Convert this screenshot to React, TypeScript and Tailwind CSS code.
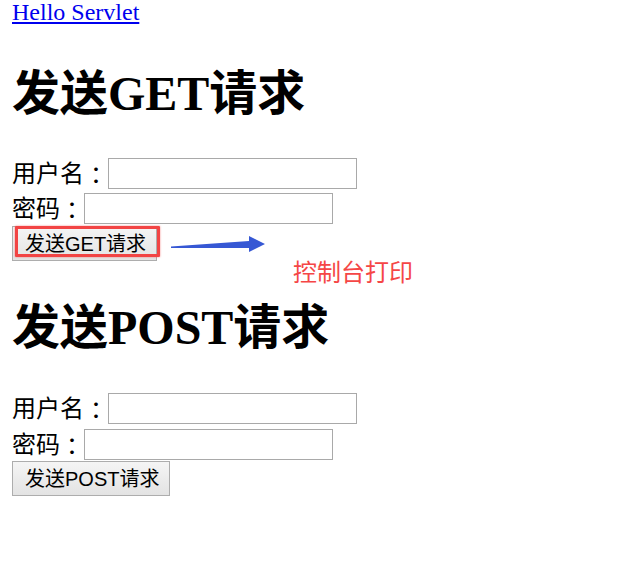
const serif = "font-['Liberation_Serif','Noto_Sans_CJK_SC',serif]";
const btnFont = "font-['Liberation_Sans','Noto_Sans_CJK_SC',sans-serif]";

function Field({ label }: { label: string }) {
  return (
    <div className="flex h-[31px] items-center">
      <span className={`${serif} text-[24px] leading-[24px]`}>{label}</span>
      <span className="font-['Noto_Sans_CJK_TC',sans-serif] text-[24px] leading-[24px]">：</span>
      <input
        type="text"
        className="h-[31px] w-[249px] border border-[#a9a9a9] bg-white outline-none"
      />
    </div>
  );
}

function SubmitButton({ text, width }: { text: string; width: string }) {
  return (
    <button
      className={`${btnFont} ${width} h-[35px] border border-[#adadad] bg-gradient-to-b from-[#f5f5f5] to-[#e3e3e3] pl-[12px] text-left text-[20px] leading-[20px] text-black`}
    >
      {text}
    </button>
  );
}

export default function App() {
  return (
    <div className="relative min-h-[583px] w-[619px] bg-white pl-[12px] text-black">
      <a
        href="#"
        className={`${serif} block w-max text-[24px] leading-[24px] text-[#0000ee] underline`}
      >
        Hello Servlet
      </a>

      {/* GET */}
      <h1 className={`${serif} mt-[46px] text-[48px] leading-[48px] font-bold`}>发送GET请求</h1>
      <form className="mt-[40px]">
        <Field label="用户名" />
        <div className="mt-[4px]">
          <Field label="密码" />
        </div>
        <div className="relative mt-[2px] w-max">
          <SubmitButton text="发送GET请求" width="w-[145px]" />
          <div className="pointer-events-none absolute left-[3px] top-0 h-[31px] w-[145px] rounded-[1px] border-[3px] border-[#f24444] shadow-[0_0_2px_rgba(240,60,60,0.7)]" />
          <svg
            className="pointer-events-none absolute left-[153px] top-[4px]"
            width="110"
            height="30"
            viewBox="153 4 110 30"
          >
            <polygon
              points="159,20.5 237,15 237,10 253,18 237,26 237,22 159,22"
              fill="#3658d4"
            />
          </svg>
          <span className="pointer-events-none absolute left-[281px] top-[33px] whitespace-nowrap font-['Noto_Sans_CJK_SC',sans-serif] text-[24px] leading-[24px] text-[#f54646]">
            控制台打印
          </span>
        </div>
      </form>

      {/* POST */}
      <h1 className={`${serif} mt-[43px] text-[48px] leading-[48px] font-bold`}>发送POST请求</h1>
      <form className="mt-[41px]">
        <Field label="用户名" />
        <div className="mt-[5px]">
          <Field label="密码" />
        </div>
        <div className="mt-[1px]">
          <SubmitButton text="发送POST请求" width="w-[158px]" />
        </div>
      </form>
    </div>
  );
}
